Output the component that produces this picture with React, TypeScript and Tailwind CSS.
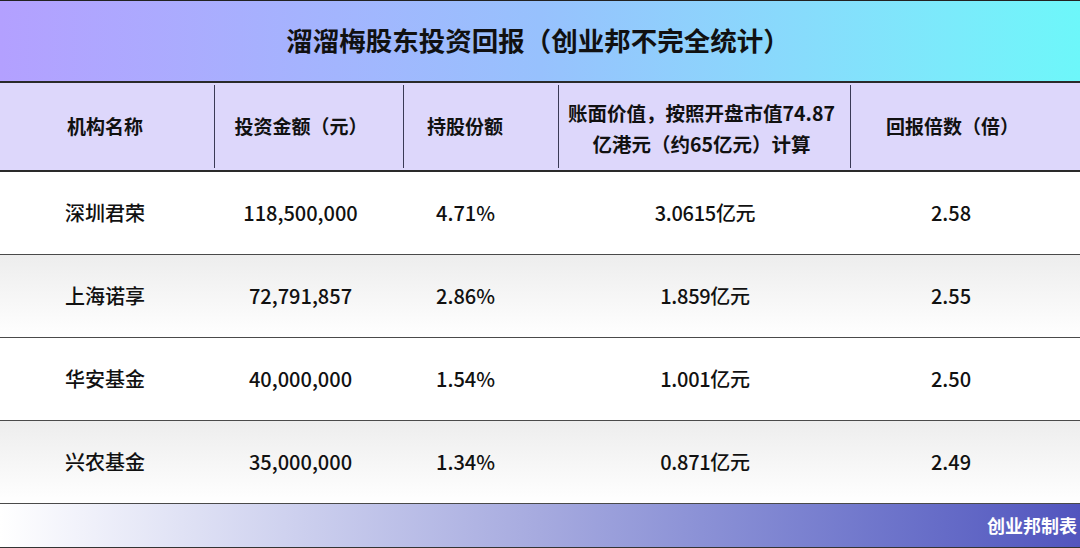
import React from "react";

const font = { fontFamily: '"Noto Sans CJK SC", "Noto Sans", sans-serif' };

const rows = [
  { name: "深圳君荣", amount: "118,500,000", share: "4.71%", value: "3.0615亿元", ret: "2.58", grad: false },
  { name: "上海诺享", amount: "72,791,857", share: "2.86%", value: "1.859亿元", ret: "2.55", grad: true },
  { name: "华安基金", amount: "40,000,000", share: "1.54%", value: "1.001亿元", ret: "2.50", grad: false },
  { name: "兴农基金", amount: "35,000,000", share: "1.34%", value: "0.871亿元", ret: "2.49", grad: true },
];

export default function App() {
  return (
    <div className="w-[1080px] h-[548px] overflow-hidden bg-white text-[#111]" style={font}>
      <div className="h-[83px] border-t border-b-2 border-t-[#222] border-b-[#2a2a2a] bg-gradient-to-r from-[#b3a0ff] via-[#97c1fd] to-[#6df7fa] flex items-center justify-center pb-[3px]">
        <div className="text-[26.5px] font-bold text-[#111] pr-[4px]">溜溜梅股东投资回报（创业邦不完全统计）</div>
      </div>
      <div className="h-[89px] border-b-2 border-[#2a2a2a] bg-[#ddd7fb] flex text-[19px] font-bold">
        <div className="w-[214px] flex items-center justify-center pr-1 my-[2px]">机构名称</div>
        <div className="w-[189px] border-l border-[#3a3a55] flex items-center justify-center pr-[16px] my-[2px]">投资金额（元）</div>
        <div className="w-[155px] border-l border-[#3a3a55] flex items-center justify-center pr-[32px] my-[2px]">持股份额</div>
        <div className="w-[292px] border-l border-[#3a3a55] flex items-center justify-center text-center leading-[31px] pr-[6px] pt-[3px] my-[2px] text-[19.5px]">
          <div>账面价值，按照开盘市值74.87<br />亿港元（约65亿元）计算</div>
        </div>
        <div className="flex-1 border-l border-[#3a3a55] flex items-center justify-center pr-[26px] my-[2px]">回报倍数（倍）</div>
      </div>
      {rows.map((r) => (
        <div
          key={r.name}
          className={
            "h-[83px] border-b-[1.5px] border-[#4a4a4a] flex items-center text-[20px] font-medium " +
            (r.grad ? "bg-gradient-to-b from-[#ededed] to-[#ffffff]" : "bg-white")
          }
        >
          <div className="w-[214px] flex justify-center pr-1">{r.name}</div>
          <div className="w-[189px] flex justify-center pr-4">{r.amount}</div>
          <div className="w-[155px] flex justify-center pr-[30px]">{r.share}</div>
          <div className="w-[292px] flex justify-center pl-[2px] tracking-[-0.3px]">{r.value}</div>
          <div className="flex-1 flex justify-center pr-7">{r.ret}</div>
        </div>
      ))}
      <div className="h-[44px] border-b border-[#333] bg-gradient-to-r from-[#ffffff] via-[#a6aadf] to-[#5255be] flex items-center justify-end pr-[3px]">
        <div className="text-[18px] font-bold text-white">创业邦制表</div>
      </div>
    </div>
  );
}
